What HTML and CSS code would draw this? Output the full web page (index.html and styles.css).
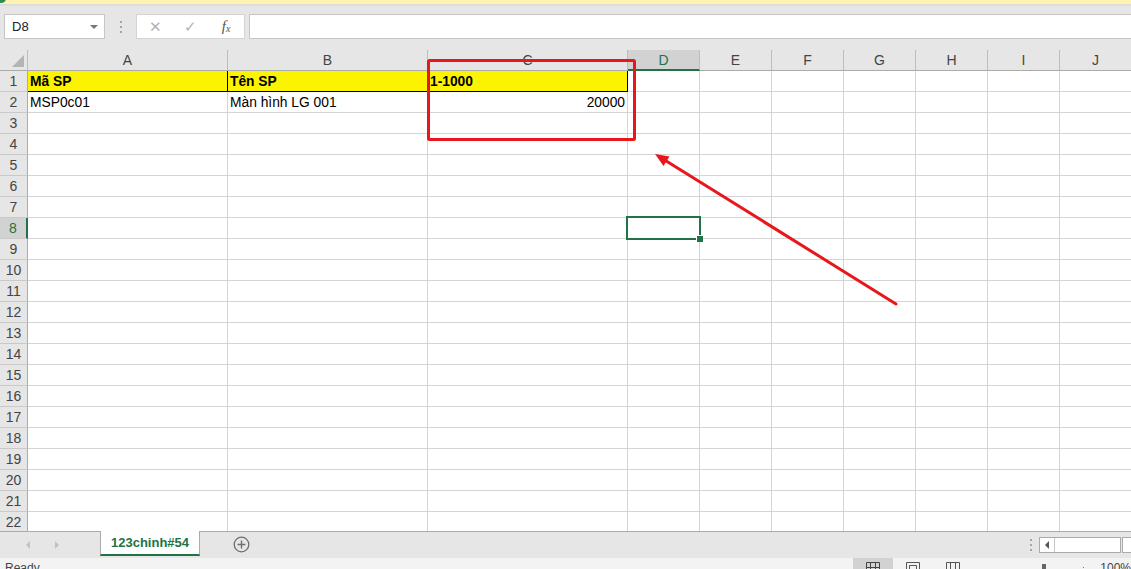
FILE: index.html
```html
<!DOCTYPE html>
<html lang="vi">
<head>
    <meta charset="UTF-8">
    <meta name="viewport" content="width=device-width, initial-scale=1.0">
    <title>123chinh#54 - Excel</title>
    <link rel="stylesheet" href="styles.css">
</head>
<body>
    <div class="app">
        <div class="titlebar"><span class="logo"></span></div>

        <div class="toolbar">
            <div class="namebox">
                <span>D8</span>
                <span class="drop"></span>
            </div>
            <div class="grip"><i></i><i></i><i></i></div>
            <div class="fbuttons">
                <span class="fb cancel">&#10005;</span>
                <span class="fb enter">&#10003;</span>
                <span class="fb fx">f<sub>x</sub></span>
            </div>
            <div class="finput"></div>
        </div>

        <div class="sheet">
            <div class="row head">
                <div class="corner"><span class="all"></span></div>
                <div class="col">A</div><div class="col">B</div><div class="col">C</div>
                <div class="col sel">D</div><div class="col">E</div><div class="col">F</div>
                <div class="col">G</div><div class="col">H</div><div class="col">I</div><div class="col">J</div>
            </div>
            <div class="row">
                <div class="rh">1</div>
                <div class="c hdr">Mã SP</div><div class="c hdr">Tên SP</div><div class="c hdr">1-1000</div>
                <div class="c"></div><div class="c"></div><div class="c"></div><div class="c"></div><div class="c"></div><div class="c"></div><div class="c"></div>
            </div>
            <div class="row">
                <div class="rh">2</div>
                <div class="c">MSP0c01</div><div class="c">Màn hình LG 001</div><div class="c num">20000</div>
                <div class="c"></div><div class="c"></div><div class="c"></div><div class="c"></div><div class="c"></div><div class="c"></div><div class="c"></div>
            </div>
            <div class="row"><div class="rh">3</div><div class="c"></div><div class="c"></div><div class="c"></div><div class="c"></div><div class="c"></div><div class="c"></div><div class="c"></div><div class="c"></div><div class="c"></div><div class="c"></div></div>
            <div class="row"><div class="rh">4</div><div class="c"></div><div class="c"></div><div class="c"></div><div class="c"></div><div class="c"></div><div class="c"></div><div class="c"></div><div class="c"></div><div class="c"></div><div class="c"></div></div>
            <div class="row"><div class="rh">5</div><div class="c"></div><div class="c"></div><div class="c"></div><div class="c"></div><div class="c"></div><div class="c"></div><div class="c"></div><div class="c"></div><div class="c"></div><div class="c"></div></div>
            <div class="row"><div class="rh">6</div><div class="c"></div><div class="c"></div><div class="c"></div><div class="c"></div><div class="c"></div><div class="c"></div><div class="c"></div><div class="c"></div><div class="c"></div><div class="c"></div></div>
            <div class="row"><div class="rh">7</div><div class="c"></div><div class="c"></div><div class="c"></div><div class="c"></div><div class="c"></div><div class="c"></div><div class="c"></div><div class="c"></div><div class="c"></div><div class="c"></div></div>
            <div class="row"><div class="rh sel">8</div><div class="c"></div><div class="c"></div><div class="c"></div><div class="c"></div><div class="c"></div><div class="c"></div><div class="c"></div><div class="c"></div><div class="c"></div><div class="c"></div></div>
            <div class="row"><div class="rh">9</div><div class="c"></div><div class="c"></div><div class="c"></div><div class="c"></div><div class="c"></div><div class="c"></div><div class="c"></div><div class="c"></div><div class="c"></div><div class="c"></div></div>
            <div class="row"><div class="rh">10</div><div class="c"></div><div class="c"></div><div class="c"></div><div class="c"></div><div class="c"></div><div class="c"></div><div class="c"></div><div class="c"></div><div class="c"></div><div class="c"></div></div>
            <div class="row"><div class="rh">11</div><div class="c"></div><div class="c"></div><div class="c"></div><div class="c"></div><div class="c"></div><div class="c"></div><div class="c"></div><div class="c"></div><div class="c"></div><div class="c"></div></div>
            <div class="row"><div class="rh">12</div><div class="c"></div><div class="c"></div><div class="c"></div><div class="c"></div><div class="c"></div><div class="c"></div><div class="c"></div><div class="c"></div><div class="c"></div><div class="c"></div></div>
            <div class="row"><div class="rh">13</div><div class="c"></div><div class="c"></div><div class="c"></div><div class="c"></div><div class="c"></div><div class="c"></div><div class="c"></div><div class="c"></div><div class="c"></div><div class="c"></div></div>
            <div class="row"><div class="rh">14</div><div class="c"></div><div class="c"></div><div class="c"></div><div class="c"></div><div class="c"></div><div class="c"></div><div class="c"></div><div class="c"></div><div class="c"></div><div class="c"></div></div>
            <div class="row"><div class="rh">15</div><div class="c"></div><div class="c"></div><div class="c"></div><div class="c"></div><div class="c"></div><div class="c"></div><div class="c"></div><div class="c"></div><div class="c"></div><div class="c"></div></div>
            <div class="row"><div class="rh">16</div><div class="c"></div><div class="c"></div><div class="c"></div><div class="c"></div><div class="c"></div><div class="c"></div><div class="c"></div><div class="c"></div><div class="c"></div><div class="c"></div></div>
            <div class="row"><div class="rh">17</div><div class="c"></div><div class="c"></div><div class="c"></div><div class="c"></div><div class="c"></div><div class="c"></div><div class="c"></div><div class="c"></div><div class="c"></div><div class="c"></div></div>
            <div class="row"><div class="rh">18</div><div class="c"></div><div class="c"></div><div class="c"></div><div class="c"></div><div class="c"></div><div class="c"></div><div class="c"></div><div class="c"></div><div class="c"></div><div class="c"></div></div>
            <div class="row"><div class="rh">19</div><div class="c"></div><div class="c"></div><div class="c"></div><div class="c"></div><div class="c"></div><div class="c"></div><div class="c"></div><div class="c"></div><div class="c"></div><div class="c"></div></div>
            <div class="row"><div class="rh">20</div><div class="c"></div><div class="c"></div><div class="c"></div><div class="c"></div><div class="c"></div><div class="c"></div><div class="c"></div><div class="c"></div><div class="c"></div><div class="c"></div></div>
            <div class="row"><div class="rh">21</div><div class="c"></div><div class="c"></div><div class="c"></div><div class="c"></div><div class="c"></div><div class="c"></div><div class="c"></div><div class="c"></div><div class="c"></div><div class="c"></div></div>
            <div class="row"><div class="rh">22</div><div class="c"></div><div class="c"></div><div class="c"></div><div class="c"></div><div class="c"></div><div class="c"></div><div class="c"></div><div class="c"></div><div class="c"></div><div class="c"></div></div>

            <!-- active cell D8 -->
            <div class="cursor"></div>

            <!-- red annotation drawn over the sheet -->
            <svg class="marks" width="1131" height="481">
                <rect x="428.5" y="10.5" width="206" height="79" rx="1" fill="none" stroke="#e8171c" stroke-width="3"></rect>
                <line x1="896" y1="254" x2="663" y2="109" stroke="#e8171c" stroke-width="3" stroke-linecap="round"></line>
                <polygon points="655,104 669.5,106.5 663.5,116" fill="#e8171c"></polygon>
            </svg>
        </div>

        <div class="tabbar">
            <div class="nav">
                <span class="tri left"></span>
                <span class="tri right"></span>
            </div>
            <div class="tab">123chinh#54</div>
            <div class="addsheet">
                <svg width="17" height="17" viewBox="0 0 17 17">
                    <circle cx="8.5" cy="8.5" r="7.3" fill="none" stroke="#6e6e6e" stroke-width="1.3"></circle>
                    <path d="M8.5 4.6v7.8M4.6 8.5h7.8" stroke="#6e6e6e" stroke-width="1.4"></path>
                </svg>
            </div>
            <div class="spacer"></div>
            <div class="grip v"><i></i><i></i><i></i></div>
            <div class="hscroll">
                <span class="arrow"><span class="tri small"></span></span>
            </div>
            <div class="hscroll2"></div>
        </div>

        <div class="statusbar">
            <span class="ready">Ready</span>
            <div class="spacer"></div>
            <div class="view on">
                <svg width="16" height="12" viewBox="0 0 16 12"><path d="M1.5 3.5h13M1.5 8.5h13M5.5 3.5v9M10.5 3.5v9M1.5 3.5v9M14.5 3.5v9" stroke="#444" fill="none"></path></svg>
            </div>
            <div class="view">
                <svg width="16" height="12" viewBox="0 0 16 12"><path d="M1.5 3.5h13v9M1.5 3.5v9M4.5 6.5h7v6M4.5 6.5v6" stroke="#555" fill="none"></path></svg>
            </div>
            <div class="view">
                <svg width="16" height="12" viewBox="0 0 16 12"><path d="M1.5 3.5h13v9M1.5 3.5v9M5.5 3.5v9M10.5 3.5v9" stroke="#555" fill="none"></path></svg>
            </div>
            <div class="zoom">
                <span class="minus"></span>
                <span class="track"></span>
                <span class="pct">100%</span>
            </div>
        </div>
    </div>
</body>
</html>
```

FILE: styles.css
```css
* {
    margin: 0;
    padding: 0;
    box-sizing: border-box;
}

body {
    font-family: "Liberation Sans", Arial, sans-serif;
    background-color: #fff;
    width: 1131px;
    height: 569px;
    overflow: hidden;
    color: #000;
}

.app {
    display: flex;
    flex-direction: column;
    height: 569px;
    overflow: hidden;
}

/* top strip */
.titlebar {
    height: 4px;
    background-color: #fdf4b0;
    position: relative;
    overflow: hidden;
}

.logo {
    position: absolute;
    left: -4px;
    top: -6px;
    width: 10px;
    height: 9px;
    border-radius: 50%;
    background-color: #2f8a55;
}

/* formula bar */
.toolbar {
    height: 46px;
    background: linear-gradient(#d9d9d9, #e6e6e6 3px);
    display: flex;
    align-items: flex-start;
    padding: 10px 0 0 4px;
}

.namebox {
    width: 101px;
    height: 25px;
    background-color: #fff;
    border: 1px solid #c6c6c6;
    display: flex;
    align-items: center;
    justify-content: space-between;
    padding: 0 6px 0 7px;
    font-size: 13px;
    color: #222;
}

.drop {
    width: 0;
    height: 0;
    border-left: 4px solid transparent;
    border-right: 4px solid transparent;
    border-top: 4px solid #777;
}

.grip {
    width: 31px;
    height: 25px;
    display: flex;
    flex-direction: column;
    align-items: center;
    justify-content: center;
    gap: 3px;
}

.grip i {
    display: block;
    width: 2px;
    height: 2px;
    background-color: #a6a6a6;
}

.fbuttons {
    width: 109px;
    height: 25px;
    background-color: #fff;
    border: 1px solid #d4d4d4;
    display: flex;
    align-items: center;
}

.fb {
    width: 36px;
    text-align: center;
    color: #b3b3b3;
    font-size: 15px;
}

.fb.cancel {
    padding-left: 1px;
}

.fb.fx {
    font-family: "Liberation Serif", serif;
    font-style: italic;
    color: #555;
    font-size: 15px;
}

.fb.fx sub {
    font-size: 10px;
    vertical-align: -1px;
}

.finput {
    flex: 1;
    height: 25px;
    margin-left: 4px;
    background-color: #fff;
    border: 1px solid #c6c6c6;
    border-right: none;
}

/* sheet */
.sheet {
    height: 481px;
    position: relative;
    overflow: hidden;
}

.row {
    display: grid;
    grid-template-columns: 28px 200px 200px 200px repeat(7, 72px);
    height: 21px;
}

.row > div {
    border-right: 1px solid #d4d4d4;
    border-bottom: 1px solid #d4d4d4;
    font-size: 13.8px;
    line-height: 21px;
    white-space: nowrap;
    overflow: hidden;
}

.row.head > div {
    background-color: #e6e6e6;
    border-right-color: #bdbdbd;
    border-bottom-color: #ababab;
    text-align: center;
    color: #444;
    font-size: 14px;
    line-height: 20px;
}

.row.head .col.sel {
    background-color: #d2d2d2;
    color: #217346;
    border-bottom: 2px solid #217346;
}

.corner {
    position: relative;
}

.corner .all {
    position: absolute;
    right: 3px;
    bottom: 3px;
    width: 0;
    height: 0;
    border-left: 12px solid transparent;
    border-bottom: 12px solid #b4b4b4;
}

.rh {
    background-color: #e6e6e6;
    text-align: center;
    color: #444;
    font-size: 14px !important;
    line-height: 20px !important;
    border-right-color: #ababab !important;
    border-bottom-color: #c9c9c9 !important;
}

.rh.sel {
    background-color: #d2d2d2;
    color: #217346;
    border-right: 2px solid #217346 !important;
}

.c {
    padding: 0 2px 0 2px;
}

.c.hdr {
    background-color: #fcf300;
    font-weight: bold;
    border-right-color: #000 !important;
    border-bottom-color: #000 !important;
}

.c.num {
    text-align: right;
}

.cursor {
    position: absolute;
    left: 626px;
    top: 166px;
    width: 75px;
    height: 24px;
    border: 2px solid #217346;
}

.cursor::after {
    content: "";
    position: absolute;
    right: -4px;
    bottom: -4px;
    width: 6px;
    height: 6px;
    background-color: #217346;
    border-left: 1px solid #fff;
    border-top: 1px solid #fff;
}

.marks {
    position: absolute;
    left: 0;
    top: 0;
    pointer-events: none;
}

/* sheet tabs */
.tabbar {
    height: 27px;
    background-color: #e6e6e6;
    border-top: 1px solid #ababab;
    display: flex;
    align-items: stretch;
}

.nav {
    width: 100px;
    display: flex;
    align-items: center;
    padding-left: 26px;
    gap: 25px;
}

.tri {
    width: 0;
    height: 0;
    border-top: 4px solid transparent;
    border-bottom: 4px solid transparent;
}

.tri.left {
    border-right: 4px solid #c2c2c2;
}

.tri.right {
    border-left: 4px solid #c2c2c2;
}

.tab {
    width: 100px;
    margin-top: -1px;
    margin-bottom: 2px;
    background-color: #fff;
    border-left: 1px solid #ababab;
    border-right: 1px solid #ababab;
    border-bottom: 2px solid #217346;
    color: #217346;
    font-weight: bold;
    font-size: 13px;
    text-align: center;
    line-height: 23px;
}

.addsheet {
    width: 83px;
    display: flex;
    align-items: center;
    justify-content: center;
    padding-bottom: 1px;
}

.spacer {
    flex: 1;
}

.grip.v {
    width: 16px;
    height: 26px;
    gap: 3px;
}

.hscroll {
    width: 82px;
    height: 16px;
    margin: 5px 1px 0 0;
    background-color: #fff;
    border: 1px solid #ababab;
    display: flex;
}

.hscroll .arrow {
    width: 15px;
    border-right: 1px solid #c6c6c6;
    display: flex;
    align-items: center;
    justify-content: center;
}

.tri.small {
    border-right: 4px solid #555;
}

.hscroll2 {
    width: 9px;
    height: 16px;
    margin-top: 5px;
    background-color: #fff;
    border: 1px solid #ababab;
    border-right: none;
}

/* status bar */
.statusbar {
    flex: 1;
    background-color: #f3f3f3;
    display: flex;
    align-items: flex-start;
    overflow: hidden;
}

.ready {
    font-size: 12px;
    color: #444;
    padding: 3px 0 0 5px;
}

.view {
    width: 40px;
    height: 14px;
    display: flex;
    justify-content: center;
    padding-top: 1px;
}

.view.on {
    background-color: #d2d2d2;
}

.zoom {
    width: 158px;
    display: flex;
    align-items: flex-start;
    padding-left: 69px;
}

.zoom .minus {
    width: 6px;
    height: 8px;
    margin-top: 6px;
    background-color: #666;
}

.zoom .track {
    width: 53px;
    height: 1px;
    margin-top: 9px;
    border-right: 1px solid #777;
}

.zoom .pct {
    font-size: 12px;
    color: #444;
    margin-left: 16px;
    padding-top: 3px;
}
```
